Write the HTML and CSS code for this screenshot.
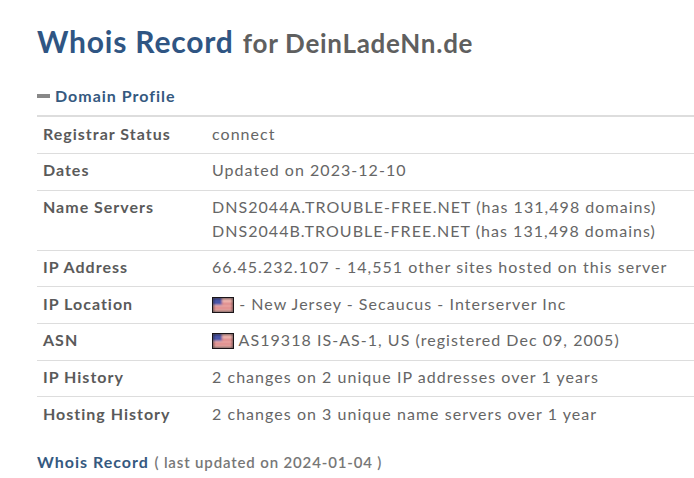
FILE: index.html
```html
<!DOCTYPE html>
<html lang="en">
<head>
<meta charset="utf-8">
<title>Whois Record for DeinLadeNn.de</title>
<link rel="stylesheet" href="styles.css">
</head>
<body>
<main class="page">
  <h1 class="title"><span class="title-main">Whois Record</span> <small class="title-sub">for DeinLadeNn.de</small></h1>
  <h2 class="section"><span class="minus"></span>Domain Profile</h2>
  <div class="table">
    <div class="row"><div class="key">Registrar Status</div><div class="val">connect</div></div>
    <div class="row"><div class="key">Dates</div><div class="val">Updated on 2023-12-10</div></div>
    <div class="row"><div class="key">Name Servers</div><div class="val">DNS2044A.TROUBLE-FREE.NET (has 131,498 domains)<br>DNS2044B.TROUBLE-FREE.NET (has 131,498 domains)</div></div>
    <div class="row"><div class="key">IP Address</div><div class="val">66.45.232.107 - 14,551 other sites hosted on this server</div></div>
    <div class="row"><div class="key">IP Location</div><div class="val"><svg class="flag" viewBox="0 0 22 16"><use href="#us"/></svg> - New Jersey - Secaucus - Interserver Inc</div></div>
    <div class="row"><div class="key">ASN</div><div class="val"><svg class="flag" viewBox="0 0 22 16"><use href="#us"/></svg> AS19318 IS-AS-1, US (registered Dec 09, 2005)</div></div>
    <div class="row"><div class="key">IP History</div><div class="val">2 changes on 2 unique IP addresses over 1 years</div></div>
    <div class="row"><div class="key">Hosting History</div><div class="val">2 changes on 3 unique name servers over 1 year</div></div>
  </div>
  <p class="foot"><span class="foot-main">Whois Record</span> ( last updated on 2024-01-04 )</p>
</main>
<svg class="defs" width="0" height="0" aria-hidden="true">
  <defs>
    <filter id="soft" x="-0.1" y="-0.1" width="1.2" height="1.2"><feGaussianBlur stdDeviation="0.9"/></filter>
    <g id="us">
      <rect width="22" height="16" fill="#fff"/>
      <g filter="url(#soft)">
        <rect x="0" y="0" width="22" height="16" fill="#120c10"/>
        <rect x="2" y="2" width="18" height="12" fill="#eeb4ae"/>
        <path d="M2 6h18v2H2zM2 10h18v2H2z" fill="#d9757a"/>
        <rect x="2" y="2" width="8" height="6" fill="#4a55a8"/>
      </g>
      <rect x="0.5" y="0.5" width="21" height="15" fill="none" stroke="#1a1418" stroke-width="1"/>
    </g>
  </defs>
</svg>
</body>
</html>
```
FILE: styles.css
```css
* { box-sizing: border-box; }
html, body { margin: 0; padding: 0; background: #fff; }
body { font-family: Lato, "Liberation Sans", sans-serif; color: #555; overflow: hidden; height: 478px; }
.page { padding: 22px 0 0 37px; }
.title { margin: 0; font-size: 30px; line-height: 38px; font-weight: 700; letter-spacing: 0.8px; }
.title-main { color: #2f5583; }
.title-sub { font-size: 26px; font-weight: 700; color: #5f5f5f; letter-spacing: 0.72px; margin-left: 1px; }
.section { margin: 24px 0 0; display: flex; align-items: center; font-size: 16px; line-height: 20px; font-weight: 700; color: #35597f; letter-spacing: 1px; height: 20px; }
.minus { width: 13px; height: 4px; background: #888; margin-right: 5px; }
.table { margin-top: 9.2px; border-top: 2px solid #ddd; }
.row { display: flex; border-bottom: 1px solid #ddd; padding: 4.6px 0 7.67px; font-size: 16px; line-height: 23.4px; letter-spacing: 1.04px; }
.row:last-child { border-bottom: 0; }
.key { width: 175px; padding-left: 6px; font-weight: 700; color: #5a5a5a; flex: none; letter-spacing: 1px; }
.val { color: #666; white-space: nowrap; }
.flag { width: 22px; height: 16px; vertical-align: -3px; }
.foot { margin: 19px 0 0; font-size: 15px; line-height: 20px; font-weight: 600; color: #777; letter-spacing: 0.85px; }
.foot-main { color: #35597f; font-size: 16px; font-weight: 700; letter-spacing: 1px; margin-right: 1px; }
.defs { position: absolute; }
```
